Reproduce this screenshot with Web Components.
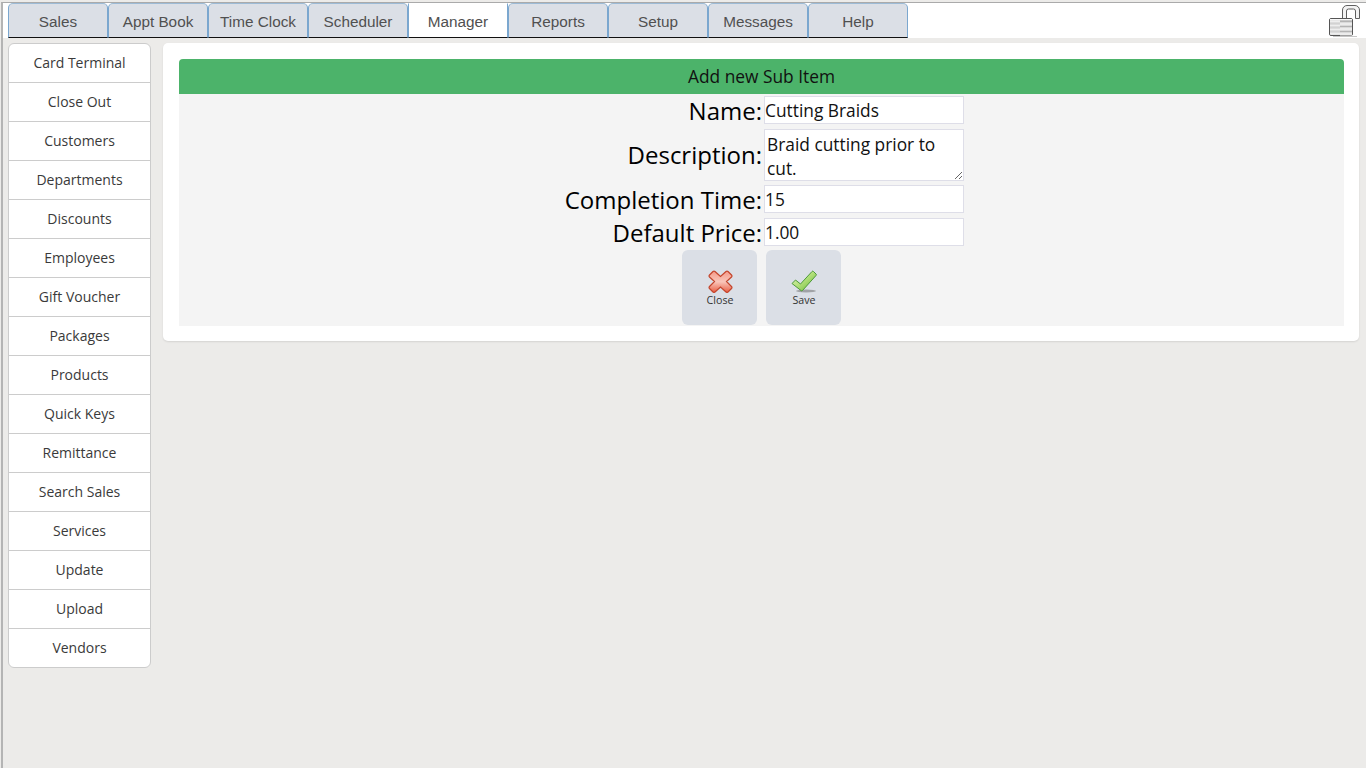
<!DOCTYPE html>
<html><head><meta charset="utf-8">
<style>
html,body{margin:0;height:100%;overflow:hidden}
body{background:#ecebe9;font-family:"Open Sans",sans-serif}
app-shell{height:768px}
</style></head>
<body>
<app-shell>
  <top-tabs slot="top"></top-tabs>
  <side-menu slot="side"></side-menu>
  <sub-item-form slot="main"></sub-item-form>
</app-shell>
<script>
const def=(name,css,html)=>customElements.define(name,class extends HTMLElement{
  connectedCallback(){
    if(this.shadowRoot)return;
    const r=this.attachShadow({mode:'open'});
    r.innerHTML=`<style>${css}</style>${typeof html==='function'?html(this):html}`;
  }
});
def('app-shell',`
:host{display:flex;flex-direction:column;box-sizing:border-box;border-top:1px solid #aaa;margin-top:2px;border-left:2px solid #b4b4b4;margin-left:1px}
.top{flex:none}
.row{display:flex;align-items:flex-start;padding:5px 7px 0 5px;gap:12px}
`,`<div class="top"><slot name="top"></slot></div><div class="row"><slot name="side"></slot><slot name="main"></slot></div>`);

def('top-tabs',`
:host{display:flex;height:35px;background:#fff;padding-left:5px;position:relative}
.lock{position:absolute;left:1326px;top:2px}
`,()=>{
  const names=['Sales','Appt Book','Time Clock','Scheduler','Manager','Reports','Setup','Messages','Help'];
  return names.map(n=>`<tab-item ${n==='Manager'?'active':''}>${n}</tab-item>`).join('')+`
  <svg class="lock" width="32" height="33" viewBox="0 0 32 33">
    <path d="M13.500 14V5a4.500 4.500 0 0 1 4.500-4.500h8A4.500 4.500 0 0 1 30.500 5v8.500h-4V6a2 2 0 0 0-2-2h-5a2 2 0 0 0-2 2v8" fill="#f3f3f3" stroke="#5f5f5f"/>
    <rect x=".5" y="13.500" width="23" height="17" rx="1.500" fill="#dedede" stroke="#555"/>
    <path d="M1 14.500h22" stroke="#f8f8f8"/>
    <path d="M1 16.500h10M1 20.500h10M1 24.500h10M1 28.500h10" stroke="#eeeeee" stroke-width="2"/>
    <path d="M1 18.500h10M1 22.500h10M1 26.500h10" stroke="#d2d2d2" stroke-width="2"/>
    <path d="M11 16.500h12M11 21.500h12M11 26.500h12" stroke="#b4b4b4" stroke-width="2"/>
    <path d="M11 19h12M11 24h12M11 29h12" stroke="#ececec" stroke-width="3"/>
    <path d="M4 31.500h24" stroke="#999" opacity=".55"/>
  </svg>`;
});
def('tab-item',`
:host{display:block;box-sizing:border-box;width:100px;height:35px;background:#dbdfe6;border:solid #7ba7cf;border-width:1px 1px 0 1px;border-top-color:#9dbbd6;border-radius:5px 5px 0 0;border-bottom:1px solid #111;font:15.300px/36px "Liberation Sans",Arial,sans-serif;color:#505050;text-align:center;}
:host([active]){background:#fff;border-top-color:#fff;border-radius:0}
`,`<slot></slot>`);

def('side-menu',`
:host{display:block;flex:none;box-sizing:border-box;width:143px;height:625px;background:#fff;border:1px solid #ccc;border-radius:6px;overflow:hidden}
`,()=>['Card Terminal','Close Out','Customers','Departments','Discounts','Employees','Gift Voucher','Packages','Products','Quick Keys','Remittance','Search Sales','Services','Update','Upload','Vendors'].map(n=>`<menu-row>${n}</menu-row>`).join(''));
def('menu-row',`
:host{display:block;box-sizing:border-box;height:39px;border-bottom:1px solid #ccc;font:14px/38px "Open Sans",sans-serif;color:#3a3a3a;text-align:center}
:host(:last-child){border-bottom:0}
`,`<slot></slot>`);

def('sub-item-form',`
:host{display:block;flex:1;box-sizing:border-box;height:298px;background:#fff;border-radius:5px;padding:16px 15px 15px 16px;box-shadow:0 1px 2px rgba(0,0,0,.1)}
.head{height:35px;background:#4cb36a;border-radius:4px 4px 0 0;font:17.330px/34px "Open Sans",sans-serif;color:#111;text-align:center}
.body{background:#f4f4f4;height:232px;display:grid;grid-template-columns:583px 200px;column-gap:2px;grid-template-rows:33px 56px 33px 33px;align-content:start}
.body>span{font:24px/34px "Open Sans",sans-serif;color:#000;text-align:right;align-self:center}
.f{box-sizing:border-box;width:200px;height:28px;margin-top:2px;background:#fff;border:1px solid #dedee8;font:17.330px/26px "Open Sans",sans-serif;color:#111;padding-left:0;align-self:start}
textarea.f{height:52px;padding:2px 2px;line-height:24px;display:block;margin:2px 0 0;outline:0;resize:vertical;overflow:hidden}
.btns{grid-column:1 / -1;display:flex;gap:9px;padding:1px 0 0 503px}
`,`<div class="head">Add new Sub Item</div>
<div class="body">
<span>Name:</span><div class="f">Cutting Braids</div>
<span>Description:</span><textarea class="f">Braid cutting prior to cut.</textarea>
<span>Completion Time:</span><div class="f">15</div>
<span>Default Price:</span><div class="f">1.00</div>
<div class="btns">
<icon-btn label="Close"><svg width="26" height="24" viewBox="0 0 26 24"><defs><linearGradient id="xg" x1="0" y1="0" x2="0" y2="1"><stop offset="0" stop-color="#f59a88"/><stop offset=".5" stop-color="#f9c6ba"/><stop offset="1" stop-color="#e85f45"/></linearGradient></defs><path d="M2.500 6L6 2.500a1.500 1.500 0 0 1 2 0l5.500 5 5.500-5a1.500 1.500 0 0 1 2 0L24.500 6a1.500 1.500 0 0 1 0 2L19.500 12.500l5 5a1.500 1.500 0 0 1 0 2L21 23a1.500 1.500 0 0 1-2 0l-5.500-5-5.500 5a1.500 1.500 0 0 1-2 0l-3.500-3.500a1.500 1.500 0 0 1 0-2l5-5-5-4.500a1.500 1.500 0 0 1 0-2z" fill="url(#xg)" stroke="#c4452c" stroke-width="1.200"/></svg></icon-btn>
<icon-btn label="Save"><svg width="26" height="24" viewBox="0 0 26 24"><defs><linearGradient id="cg" x1="0" y1="0" x2="1" y2="1"><stop offset="0" stop-color="#e4f5c8"/><stop offset=".45" stop-color="#b7e27f"/><stop offset="1" stop-color="#62b52f"/></linearGradient></defs><ellipse cx="15" cy="22" rx="10" ry="1.500" fill="#666" opacity=".5"/><path d="M1 14.500l3.500-3.500 5 4L21 2.500a1 1 0 0 1 1.500 0l2.500 2.500a1 1 0 0 1 0 1.500L11.500 21.500a1 1 0 0 1-1.500 0z" fill="url(#cg)" stroke="#4d9a3a"/></svg></icon-btn>
</div></div>`);
def('icon-btn',`
:host{display:block;box-sizing:border-box;width:75px;height:75px;background:#dbdfe6;border-radius:6px;text-align:center;padding-top:19px}
::slotted(svg){display:block;margin:0 auto}
.l{font:10.670px/14px "Open Sans",sans-serif;color:#333;padding-left:1px}
`,h=>`<slot></slot><div class="l">${h.getAttribute('label')}</div>`);
</script>
</body></html>
